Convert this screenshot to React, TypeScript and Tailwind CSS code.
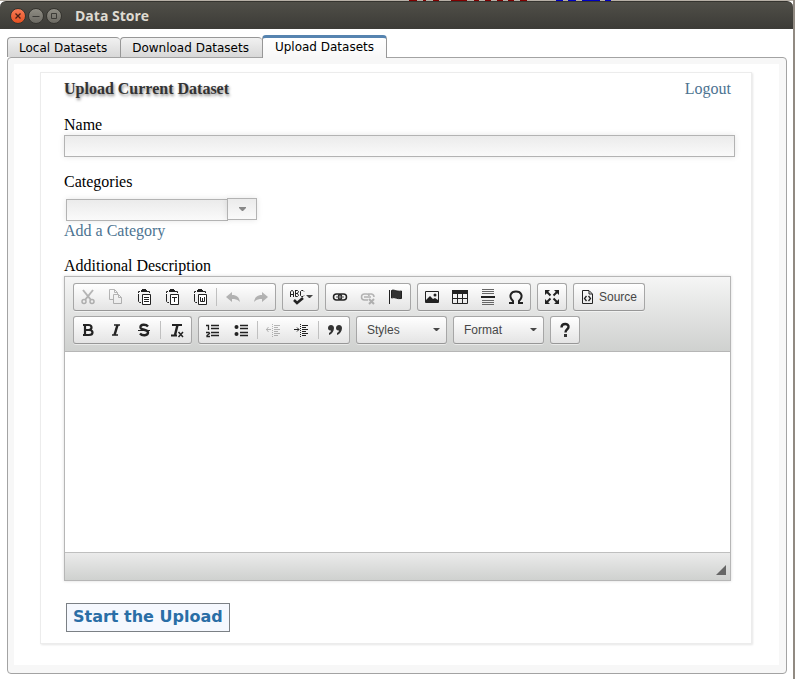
import { useState, type ReactNode } from "react";

const K = "#333333";

function Glyph({ label, off, children }: { label: string; off?: boolean; children: ReactNode }) {
  return (
    <button type="button" aria-label={label} title={label} disabled={off} className={"flex h-[26px] w-7 shrink-0 items-center justify-center " + (off ? "opacity-30" : "")}>
      <svg width="16" height="16" viewBox="0 0 16 16" fill="none" stroke="#222222" aria-hidden="true">
        {children}
      </svg>
    </button>
  );
}

function Group({ children }: { children: ReactNode }) {
  return <div className="flex h-7 shrink-0 items-center rounded-[3px] border border-[#a6a6a6] border-b-[#979797] bg-gradient-to-b from-white to-[#e4e4e4] shadow-[0_1px_0_rgba(255,255,255,0.5)]">{children}</div>;
}

function Sep() {
  return <span className="mx-0.5 h-[18px] w-px bg-[#c0c0c0]" />;
}

function Caret() {
  return (
    <svg width="7" height="4" viewBox="0 0 7 4" aria-hidden="true">
      <path d="M0 0H7L4 3H3Z" fill="#474747" />
    </svg>
  );
}

function Combo({ label }: { label: string }) {
  return (
    <Group>
      <button type="button" className="flex h-[26px] w-[89px] items-center justify-between pr-1.5 pl-2.5 font-['Liberation_Sans',Arial,sans-serif] text-[12px] text-[#474747]">
        {label}
        <Caret />
      </button>
    </Group>
  );
}

function Clipboard({ children }: { children?: ReactNode }) {
  return (
    <>
      <path d="M4 2.5H2.5V4M2.500 5V12.500L3.500 13.500H5M11 2.500H13.500V4" />
      <path d="M5 1H6V0H10V1H11V3H5Z" fill="#222" stroke="none" />
      <path d="M6.500 5.500H14.500V15.500H6.500Z" fill="white" />
      {children}
    </>
  );
}

function Indent({ arrow }: { arrow: string }) {
  return (
    <>
      <path d="M6.5 2V15" strokeDasharray="1 1" />
      <path d="M8 3.5H14M8 5.5H12M8 7.5H14M8 9.5H12M8 11.5H14M8 13.5H12" />
      <path d={arrow} />
    </>
  );
}

function Toolbar() {
  return (
    <div role="toolbar" aria-label="Editor toolbar" className="flex flex-col gap-[5px] border-b border-[#b6b6b6] bg-gradient-to-b from-[#f5f5f5] to-[#cfd1cf] px-2 pt-1.5 pb-[7px]">
      <div className="flex gap-1.5">
        <Group>
          <Glyph label="Cut" off>
            <path d="M3 1L11 11M13 1L5 11" strokeWidth="2" />
            <circle cx="4" cy="12.5" r="2" strokeWidth="1.5" />
            <circle cx="12" cy="12.5" r="2" strokeWidth="1.5" />
          </Glyph>
          <Glyph label="Copy" off>
            <path d="M5 10.5H1.5V.5H6.500L9.500 3.500V5M6.500.5V3.500H9.500M5.500 5.500H10.500L13.500 8.500V14.500H5.500ZM10.500 5.500V8.500H13.500" />
          </Glyph>
          <Glyph label="Paste"><Clipboard><path d="M8 8.500H13M8 10.500H13M8 12.500H13" /></Clipboard></Glyph>
          <Glyph label="Paste as plain text"><Clipboard><path d="M8 8.500H13M10.500 8V13" /></Clipboard></Glyph>
          <Glyph label="Paste from Word"><Clipboard><path d="M8.500 8V12.500H12.500V8M10.500 9V12" /></Clipboard></Glyph>
          <Sep />
          <Glyph label="Undo" off><path d="M1 8L7 3V6C12 6 14 8 15 13C12 10 10 10 7 10V13Z" fill="#222" stroke="none" /></Glyph>
          <Glyph label="Redo" off><path d="M15 8L9 3V6C4 6 2 8 1 13C4 10 6 10 9 10V13Z" fill="#222" stroke="none" /></Glyph>
        </Group>
        <Group>
          <button type="button" aria-label="Spell check" className="flex h-[26px] w-[35px] items-center justify-center gap-px">
            <svg width="16" height="16" viewBox="0 0 16 16" fill="none" stroke="#222" aria-hidden="true">
              <path d="M1.500 8V3L2.500 1.500H3.500L4.500 3V8M2 5.500H4M6.500 1V7.500H8.500L9.500 6.500L8.500 4.500H7H8.500L9.500 2.500L8.500 1.500H6.500M15 2.500L14 1.500H12.500L11.500 2.500V6.500L12.500 7.500H14L15 6.500" />
              <path d="M5 11L8 14L14 9" strokeWidth="2.500" />
            </svg>
            <Caret />
          </button>
        </Group>
        <Group>
          <Glyph label="Link">
            <rect x="1.500" y="5" width="8" height="6" rx="3" strokeWidth="1.500" />
            <rect x="6.500" y="5" width="8" height="6" rx="3" strokeWidth="1.500" />
            <path d="M4 8H12" stroke="#555" />
          </Glyph>
          <Glyph label="Unlink" off>
            <path d="M8 11H4.500A3 3 0 0 1 4.500 5H7A2 2 0 0 1 9 7M8 5H11.500A3 3 0 0 1 14 8M4 8H11" strokeWidth="1.500" />
            <path d="M9 10L14 15M14 10L9 15" strokeWidth="2" />
          </Glyph>
          <Glyph label="Anchor"><path d="M1.500 1V15" /><path d="M3.500 1.500C6 0 8 3 13.500 2V9.500C9 10.500 7 7.500 3.500 9Z" fill={K} stroke="#222" /></Glyph>
        </Group>
        <Group>
          <Glyph label="Image"><path d="M1.500 2.500H14.500V13.500H1.500Z" /><path d="M2 13V11L6 7L9 10L11 9L14 11V13Z" fill="#222" stroke="none" /><circle cx="11" cy="6" r="1.500" fill="#222" stroke="none" /></Glyph>
          <Glyph label="Table"><path d="M.5 1.500H15.500V14.500H.5ZM5.500 4V14M10.500 4V14M1 9.500H15" /><path d="M0 1H16V5H0Z" fill="#222" stroke="none" /></Glyph>
          <Glyph label="Horizontal line"><path d="M2 .5H14M2 2.500H14M2 4.500H14M2 11.500H14M2 13.500H14M2 15.500H14" stroke="#666" /><path d="M1 8H15" strokeWidth="2" /></Glyph>
          <Glyph label="Special character"><path d="M1 14H5V12C0 7 3 2.500 8 2.500S16 7 11 12V14H15" strokeWidth="2" /></Glyph>
        </Group>
        <Group>
          <Glyph label="Maximize"><path d="M6.500 6.500L2 2M9.500 6.500L14 2M6.500 9.500L2 14M9.500 9.500L14 14" strokeWidth="2" /><path d="M1 1H6L1 6ZM10 1H15V6ZM1 10L6 15H1ZM15 10V15H10Z" fill="#222" stroke="none" /></Glyph>
        </Group>
        <Group>
          <button type="button" className="flex h-[26px] w-[70px] items-center gap-[5px] pl-1.5 font-['Liberation_Sans',Arial,sans-serif] text-[12px] text-[#474747]">
            <svg width="14" height="16" viewBox="0 0 14 16" fill="none" stroke="#222" aria-hidden="true"><path d="M2.500 1.500H9L12.500 5V14.500H2.500ZM9 2V5H12" /><path d="M6.500 7L4.500 9.500L6.500 12M8.500 7L10.500 9.500L8.500 12" strokeWidth="1.300" /></svg>
            Source
          </button>
        </Group>
      </div>
      <div className="flex gap-1.5">
        <Group>
          <Glyph label="Bold"><path d="M3 3H8.500Q11.500 3 11.500 5.500T8.500 8H5H9Q12.500 8 12.500 10.500T9 13H3M5 3V13" strokeWidth="2.200" /></Glyph>
          <Glyph label="Italic"><path d="M6 3H12M4 13H10" strokeWidth="1.500" /><path d="M9.500 3L6.500 13" strokeWidth="2.500" /></Glyph>
          <Glyph label="Strikethrough"><path d="M12 4.500C10 2 4 2 4.500 5.500C5 8.500 12 7 12 10.500C12 14 6 14 4 11.500" strokeWidth="2.400" /><path d="M2 8.500H14" /></Glyph>
          <Sep />
          <Glyph label="Remove format"><path d="M3 3H13M2 13.500H8" strokeWidth="1.800" /><path d="M8.500 3L6 13" strokeWidth="2.500" /><path d="M9.500 10L14 15M14 10L9.500 15" strokeWidth="1.500" /></Glyph>
        </Group>
        <Group>
          <Glyph label="Numbered list"><path d="M1 3.500H3.500V8M1 10.500H4L4.500 11.500L2 13.500V14.500H5" strokeWidth="1.300" /><path d="M6 3.500H14M6 6.500H14M6 10.500H14M6 13.500H14" strokeWidth="1.300" /></Glyph>
          <Glyph label="Bulleted list"><circle cx="3.500" cy="5" r="2" fill="#222" stroke="none" /><circle cx="3.500" cy="12" r="2" fill="#222" stroke="none" /><path d="M7 3.500H15M7 6.500H15M7 10.500H15M7 13.500H15" strokeWidth="1.300" /></Glyph>
          <Sep />
          <Glyph label="Decrease indent" off><Indent arrow="M0 7.500H5M2.500 5L0.500 7.500L2.500 10" /></Glyph>
          <Glyph label="Increase indent"><Indent arrow="M0 7.500H5M3 5.500L5 7.500L3 9.500" /></Glyph>
          <Sep />
          <Glyph label="Block quote"><path d="M7 6C7 9 5 12 2 13V11C3 10.500 4 9.500 4 8.500C2 9 1 7.500 1 6C1 2 7 2 7 6ZM15 6C15 9 13 12 10 13V11C11 10.500 12 9.500 12 8.500C10 9 9 7.500 9 6C9 2 15 2 15 6Z" fill={K} stroke="none" /></Glyph>
        </Group>
        <Combo label="Styles" />
        <Combo label="Format" />
        <Group>
          <Glyph label="Help"><path d="M4.500 5.500C4.500 1 12 1 11.500 5C11.500 7.500 8.500 7 8.500 10.500" strokeWidth="2.400" /><path d="M7 12H10V15H7Z" fill={K} stroke="none" /></Glyph>
        </Group>
      </div>
    </div>
  );
}

const tabs = ["Local Datasets", "Download Datasets", "Upload Datasets"];
const field = "h-[22px] border border-[#b3b3b3] bg-gradient-to-b from-[#ebebeb] to-[#fafafa] px-1 shadow-[0_0_6px_rgba(0,0,0,0.1)] outline-none";
const round = "size-4 rounded-full border border-[#35342f] bg-gradient-to-b ";

export default function App() {
  const [active, setActive] = useState(2);
  return (
    <div className="flex min-h-screen flex-col border-r-2 border-[#918a82] bg-white font-['Liberation_Serif','Times_New_Roman',serif] text-[16px] leading-[18px] text-black">
      <svg className="h-px w-full shrink-0 bg-[#b7b0a6]" height="1" aria-hidden="true">
        <path d="M409 .5h8m6 0h3m7 0h6m12 0h16m7 0h5m6 0h6m6 0h6m5 0h6m6 0h7" stroke="#800000" />
        <path d="M556 .5h7m5 0h8m6 0h18m5 0h6" stroke="#0000c0" />
      </svg>
      <header className="flex h-7 shrink-0 items-center rounded-t-md border-t border-[#35342f] bg-gradient-to-b from-[#504f48] to-[#3c3b37] pl-[10px]">
        <div className="flex gap-0.5">
          <button type="button" aria-label="Close" className={round + "from-[#f77a54] to-[#e5501f]"}><svg viewBox="0 0 14 14" stroke="#4b2015" strokeWidth="1.300"><path d="M4.500 4.500L9.500 9.500M9.500 4.500L4.500 9.500" /></svg></button>
          <button type="button" aria-label="Minimize" className={round + "from-[#8f8d84] to-[#6c6a63]"}><svg viewBox="0 0 14 14" stroke="#3c3b37"><path d="M3.500 7.500H10.500" /></svg></button>
          <button type="button" aria-label="Maximize window" className={round + "from-[#8f8d84] to-[#6c6a63]"}><svg viewBox="0 0 14 14" fill="none" stroke="#3c3b37"><path d="M4.500 4.500H9.500V9.500H4.500Z" /></svg></button>
        </div>
        <h1 className="ml-[13px] font-['Open_Sans',sans-serif] text-[14px] font-bold text-[#dfdbd2]">Data Store</h1>
      </header>
      <div role="tablist" className="flex items-end pt-1.5 pl-[7px] font-['DejaVu_Sans',sans-serif] text-[12px]">
        {tabs.map((t, i) => (
          <button
            key={t}
            type="button"
            role="tab"
            aria-selected={i === active}
            onClick={() => setActive(i)}
            className={
              i === active
                ? "z-10 -mb-px h-[23px] rounded-t-sm border-x border-t-[3px] border-[#979797] border-t-[#5684b0] bg-gradient-to-b from-white to-[#f7f7f7] px-3 pb-0.5"
                : "h-5 rounded-t-sm border-t border-l border-[#979797] bg-gradient-to-b from-[#f1f1f1] to-[#d8d8d8] pr-[13px] pl-[11px]"
            }
          >
            {t}
          </button>
        ))}
      </div>
      <main className="mr-1.5 mb-[5px] ml-[7px] grow rounded-sm border border-[#a3a3a3] bg-[#f7f7f7] p-[6px] pr-[7px] pb-2">
        <div className="h-full bg-white pt-2 pr-[27px] pb-[21px] pl-[26px]">
          <form onSubmit={(e) => e.preventDefault()} className="border border-[#ececec] pt-[7px] pr-4 pb-[11px] pl-[23px] shadow-[1px_1px_2px_rgba(0,0,0,0.1)]">
            <div className="mr-1 flex justify-between">
              <h2 className="font-bold text-[#333333] [text-shadow:1px_2px_3px_#888888]">Upload Current Dataset</h2>
              <a href="#logout" className="text-[#4c7391]">Logout</a>
            </div>
            <label htmlFor="name" className="mt-[18px] mb-px block">Name</label>
            <input id="name" type="text" className={"block w-full " + field} />
            <label htmlFor="category" className="mt-4 block">Categories</label>
            <div className="mt-[7px] ml-0.5 flex items-start">
              <input id="category" type="text" className={"mt-px w-[162px] " + field} />
              <button type="button" aria-label="Show categories" className={"-ml-px flex w-[30px] items-center justify-center " + field}>
                <svg width="7" height="4" viewBox="0 0 7 4" aria-hidden="true"><path d="M0 0H7V1L4 4H3L0 1Z" fill="#888" /></svg>
              </button>
            </div>
            <a href="#add-category" className="mt-px block w-fit text-[#4c7391]">Add a Category</a>
            <label htmlFor="description" className="mt-[17px] mb-px block">Additional Description</label>
            <div className="mr-1 border border-[#b6b6b6] shadow-[0_0_3px_rgba(0,0,0,0.15)]">
              <Toolbar />
              <textarea id="description" className="block h-[200px] w-full resize-none bg-white p-2 outline-none" />
              <div className="flex h-7 items-end justify-end border-t border-[#bfbfbf] bg-gradient-to-b from-[#ebebeb] to-[#cfd1cf] pr-1 pb-[5px]">
                <svg width="10" height="10" viewBox="0 0 10 10" aria-hidden="true"><path d="M10 0V10H0Z" fill="#666" /></svg>
              </div>
            </div>
            <button type="submit" className="mt-[22px] ml-0.5 block h-[29px] border border-[#7b8085] bg-[#f5f8fe] px-1.5 pb-0.5 font-['DejaVu_Sans',sans-serif] text-[16px] font-bold text-[#2a6ea6]">Start the Upload</button>
          </form>
        </div>
      </main>
    </div>
  );
}
